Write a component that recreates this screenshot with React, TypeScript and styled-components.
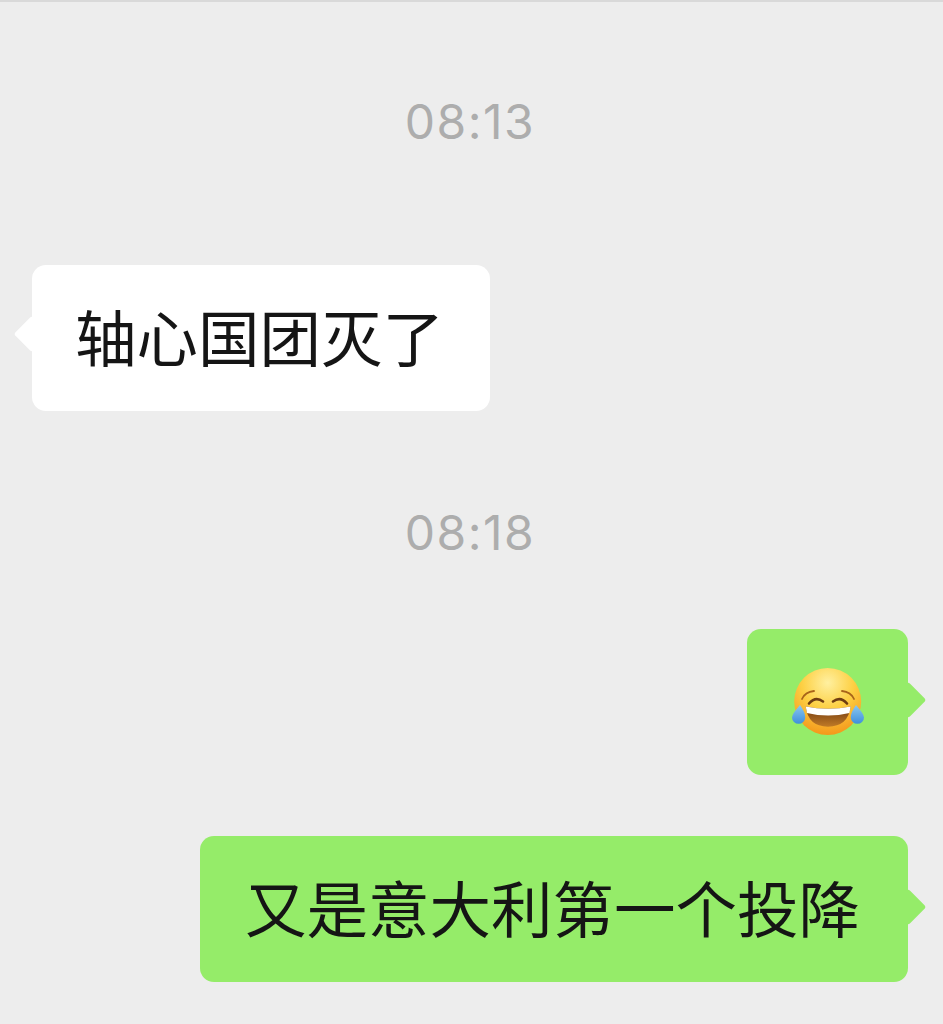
import styled, { createGlobalStyle } from "styled-components";

const GlobalStyle = createGlobalStyle`
  html, body {
    margin: 0;
    padding: 0;
    background: #ededed;
  }
`;

const ChatPage = styled.div`
  box-sizing: border-box;
  width: 943px;
  height: 1024px;
  overflow: hidden;
  background: #ededed;
  border-top: 2px solid #d9d9d9;
  padding: 0 35px 0 32px;
  display: flex;
  flex-direction: column;
  font-family: "Noto Sans CJK SC", "Liberation Sans", sans-serif;
`;

const TimeStamp = styled.div<{ $top: number; $bottom: number }>`
  margin: ${(p) => p.$top}px 0 ${(p) => p.$bottom}px;
  height: 50px;
  line-height: 50px;
  text-align: center;
  font-family: Inter, "Liberation Sans", sans-serif;
  font-size: 48px;
  font-weight: 400;
  letter-spacing: 1.5px;
  color: #adadad;
`;

const Row = styled.div<{ $mine?: boolean; $bottom?: number }>`
  display: flex;
  justify-content: ${(p) => (p.$mine ? "flex-end" : "flex-start")};
  margin-bottom: ${(p) => p.$bottom ?? 0}px;
`;

const Bubble = styled.div<{ $mine?: boolean; $pad: number }>`
  position: relative;
  box-sizing: border-box;
  height: 146px;
  padding: 0 ${(p) => p.$pad}px;
  display: flex;
  align-items: center;
  border-radius: 14px;
  background: ${(p) => (p.$mine ? "#95ec69" : "#ffffff")};
  color: #151515;
  white-space: nowrap;

  &::after {
    content: "";
    position: absolute;
    top: ${(p) => (p.$mine ? 58 : 56)}px;
    ${(p) => (p.$mine ? "right: -13px;" : "left: -13px;")}
    width: 26px;
    height: 26px;
    transform: rotate(45deg);
    border-radius: 3px;
    background: inherit;
  }
`;

const BubbleText = styled.span`
  font-size: 61.5px;
  line-height: 80px;
  margin: 0 1.5px 0 -1.5px;
  padding-bottom: 4px;
`;

const Emoji = styled.svg`
  display: block;
  width: 72px;
  height: 68px;
`;

const LaughEmoji = () => (
  <Emoji viewBox="0 0 72 68">
    <defs>
      <radialGradient id="face" cx="50%" cy="22%" r="85%">
        <stop offset="0%" stopColor="#fff0a0" />
        <stop offset="45%" stopColor="#fdd044" />
        <stop offset="100%" stopColor="#f28f14" />
      </radialGradient>
      <linearGradient id="tear" x1="0" y1="0" x2="0" y2="1">
        <stop offset="0%" stopColor="#8cc8f0" />
        <stop offset="100%" stopColor="#3f8fdc" />
      </linearGradient>
      <linearGradient id="mouth" x1="0" y1="0" x2="0" y2="1">
        <stop offset="0%" stopColor="#6e3810" />
        <stop offset="100%" stopColor="#c07a26" />
      </linearGradient>
    </defs>
    <circle cx="35.7" cy="33.5" r="33.5" fill="url(#face)" />
    <path d="M10 31 Q13 24 22 23" fill="none" stroke="#a8641a" strokeWidth="1.8" strokeLinecap="round" />
    <path d="M62 31 Q59 24 50 23" fill="none" stroke="#a8641a" strokeWidth="1.8" strokeLinecap="round" />
    <path d="M17 35.5 Q23.5 28 31 33.5" fill="none" stroke="#6e3d12" strokeWidth="2.6" strokeLinecap="round" />
    <path d="M41 33.5 Q48.5 28 55 35.5" fill="none" stroke="#6e3d12" strokeWidth="2.6" strokeLinecap="round" />
    <path d="M13.7 38.6 Q36 43 58.7 38.6 Q56 58.7 36 58.7 Q16 58.7 13.7 38.6 Z" fill="url(#mouth)" />
    <path d="M13.7 38.6 Q36 43 58.7 38.6 L57.4 45 Q36 50 15 45 Z" fill="#ffffff" />
    <path d="M8 37 Q0 46 0 49.5 A6.6 6.3 0 0 0 13.2 49.5 Q13.2 44 8 37 Z" fill="url(#tear)" />
    <path d="M64 37 Q72 46 72 49.5 A6.6 6.3 0 0 1 58.8 49.5 Q58.8 44 64 37 Z" fill="url(#tear)" />
  </Emoji>
);

export default function App() {
  return (
    <>
      <GlobalStyle />
      <ChatPage>
        <TimeStamp $top={95} $bottom={118}>
          08:13
        </TimeStamp>
        <Row $bottom={97}>
          <Bubble $pad={44.5}>
            <BubbleText>轴心国团灭了</BubbleText>
          </Bubble>
        </Row>
        <TimeStamp $top={0} $bottom={71}>
          08:18
        </TimeStamp>
        <Row $mine $bottom={61}>
          <Bubble $mine $pad={44.5}>
            <LaughEmoji />
          </Bubble>
        </Row>
        <Row $mine>
          <Bubble $mine $pad={46.5}>
            <BubbleText>又是意大利第一个投降</BubbleText>
          </Bubble>
        </Row>
      </ChatPage>
    </>
  );
}
